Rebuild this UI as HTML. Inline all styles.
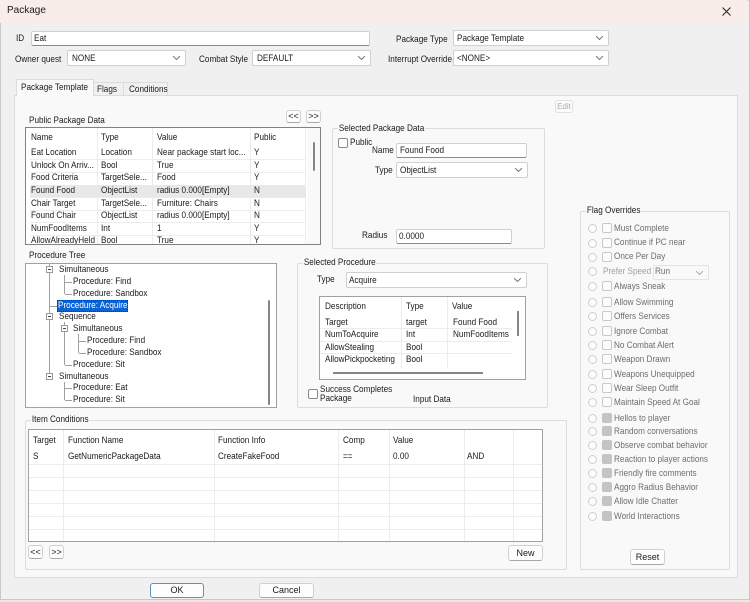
<!DOCTYPE html>
<html><head><meta charset="utf-8"><style>
*{box-sizing:border-box;margin:0;padding:0}
body{width:750px;height:602px;background:#e8e8e8;position:relative;overflow:hidden;font-family:"Liberation Sans",sans-serif;font-size:9.5px;color:#1a1a1a}
div,span{position:absolute}
.win{left:0;top:0;width:750px;height:600px;background:#f0f0f0;border:1px solid #c8c8c8}
.title{left:0;top:0;width:748px;height:23px;background:#f8ede8}
.t{white-space:nowrap;line-height:10px;transform:scaleX(0.86);transform-origin:0 0}
.in{background:#fff;border:1px solid #d0d0d0;border-bottom:1px solid #8a8a8a;border-radius:2px}
.cb{background:#fff;border:1px solid #d0d0d0;border-radius:2px}
.cb svg{position:absolute;right:5px;top:50%;margin-top:-2px}
.grp{border:1px solid #dcdcdc;border-radius:2px}
.lbl{background:#f9f9f9;padding:0 1px}
.lv{background:#fff;border:1px solid #828282}
.btn{background:#fdfdfd;border:1px solid #d0d0d0;border-bottom-color:#a8a8a8;border-radius:3px;text-align:center;font-size:9px}
.chk{width:10px;height:10px;border:1px solid #8a8a8a;border-radius:2px;background:#fff}
.dchk{width:10px;height:10px;border:1px solid #c8c8c8;border-radius:2px;background:#fcfcfc}
.cchk{width:10px;height:10px;border-radius:2px;background:#c4c4c4}
.rad{width:9px;height:9px;border:1px solid #cfcfcf;border-radius:50%;background:#fcfcfc}
.g{color:#6e6e6e}
.hl{background:#e8e8e8}
.vl{width:1px;background:#ececec}
.hr{height:1px;background:#ececec}
.tl{background:#a0a0a0}
</style></head><body>
<div class="win"></div>
<div class="title"></div>
<div class="t" style="left:7px;top:6px;font-size:10px;transform:none">Package</div>
<svg style="position:absolute;left:722px;top:7px" width="9" height="9"><path d="M0.5 0.5L8.5 8.5M8.5 0.5L0.5 8.5" stroke="#222" stroke-width="1"/></svg>

<div class="t" style="left:16px;top:34px">ID</div>
<div class="in" style="left:31px;top:31px;width:339px;height:15px"></div><div class="t" style="left:34px;top:34px">Eat</div>
<div class="t" style="left:15px;top:55px">Owner quest</div>
<div class="cb" style="left:67px;top:50px;width:119px;height:16px"><svg width="7" height="4"><path d="M0 0L3.5 3.5L7 0" stroke="#777" fill="none"/></svg></div><div class="t" style="left:72px;top:54px">NONE</div>
<div class="t" style="left:199px;top:55px">Combat Style</div>
<div class="cb" style="left:252px;top:50px;width:119px;height:16px"><svg width="7" height="4"><path d="M0 0L3.5 3.5L7 0" stroke="#777" fill="none"/></svg></div><div class="t" style="left:257px;top:54px">DEFAULT</div>
<div class="t" style="left:396px;top:35px">Package Type</div>
<div class="cb" style="left:453px;top:30px;width:156px;height:16px"><svg width="7" height="4"><path d="M0 0L3.5 3.5L7 0" stroke="#777" fill="none"/></svg></div><div class="t" style="left:457px;top:34px">Package Template</div>
<div class="t" style="left:388px;top:55px">Interrupt Override</div>
<div class="cb" style="left:453px;top:50px;width:156px;height:16px"><svg width="7" height="4"><path d="M0 0L3.5 3.5L7 0" stroke="#777" fill="none"/></svg></div><div class="t" style="left:457px;top:54px">&lt;NONE&gt;</div>

<!-- tabs -->
<div style="left:14px;top:95px;width:724px;height:483px;background:#f9f9f9;border:1px solid #dcdcdc"></div>
<div style="left:16px;top:79px;width:78px;height:17px;background:#f9f9f9;border:1px solid #dcdcdc;border-bottom:none"></div>
<div class="t" style="left:21px;top:83px">Package Template</div>
<div style="left:94px;top:82px;width:30px;height:13px;border:1px solid #dcdcdc;border-bottom:none;border-left:none"></div><div class="t" style="left:97px;top:85px">Flags</div>
<div style="left:124px;top:82px;width:44px;height:13px;border:1px solid #dcdcdc;border-bottom:none;border-left:none"></div><div class="t" style="left:129px;top:85px">Conditions</div>

<div class="btn" style="left:555px;top:100px;width:18px;height:13px;border-color:#e0e0e0;color:#a8a8a8;line-height:11px;font-size:8px">Edit</div>

<!-- Public package data -->
<div class="t" style="left:29px;top:116px">Public Package Data</div>
<div class="btn" style="left:286px;top:110px;width:15px;height:13px;line-height:10px">&lt;&lt;</div>
<div class="btn" style="left:306px;top:110px;width:15px;height:13px;line-height:10px">&gt;&gt;</div>
<div class="lv" style="left:25px;top:127px;width:296px;height:118px;overflow:hidden">
 <div class="vl" style="left:71px;top:0;height:116px"></div><div class="vl" style="left:126px;top:0;height:116px"></div><div class="vl" style="left:224px;top:0;height:116px"></div><div class="vl" style="left:279px;top:0;height:116px"></div>
 <div class="hl" style="left:4px;top:57px;width:276px;height:12px"></div>
 <div class="hr" style="left:4px;top:31px;width:276px"></div><div class="hr" style="left:4px;top:44px;width:276px"></div><div class="hr" style="left:4px;top:69px;width:276px"></div><div class="hr" style="left:4px;top:82px;width:276px"></div><div class="hr" style="left:4px;top:94px;width:276px"></div><div class="hr" style="left:4px;top:107px;width:276px"></div>
 <div style="left:281px;top:0;width:14px;height:116px;background:#f9f9f9"></div>
 <div style="left:287px;top:14px;width:2px;height:29px;background:#858585;border-radius:1px"></div>
</div>
<div class="t" style="left:31px;top:133px">Name</div><div class="t" style="left:101px;top:133px">Type</div><div class="t" style="left:157px;top:133px">Value</div><div class="t" style="left:254px;top:133px">Public</div>
<div class="t" style="left:31px;top:148px">Eat Location</div><div class="t" style="left:101px;top:148px">Location</div><div class="t" style="left:157px;top:148px">Near package start loc...</div><div class="t" style="left:254px;top:148px">Y</div>
<div class="t" style="left:31px;top:161px">Unlock On Arriv...</div><div class="t" style="left:101px;top:161px">Bool</div><div class="t" style="left:157px;top:161px">True</div><div class="t" style="left:254px;top:161px">Y</div>
<div class="t" style="left:31px;top:173px">Food Criteria</div><div class="t" style="left:101px;top:173px">TargetSele...</div><div class="t" style="left:157px;top:173px">Food</div><div class="t" style="left:254px;top:173px">Y</div>
<div class="t" style="left:31px;top:186px">Found Food</div><div class="t" style="left:101px;top:186px">ObjectList</div><div class="t" style="left:157px;top:186px">radius 0.000[Empty]</div><div class="t" style="left:254px;top:186px">N</div>
<div class="t" style="left:31px;top:199px">Chair Target</div><div class="t" style="left:101px;top:199px">TargetSele...</div><div class="t" style="left:157px;top:199px">Furniture: Chairs</div><div class="t" style="left:254px;top:199px">N</div>
<div class="t" style="left:31px;top:211px">Found Chair</div><div class="t" style="left:101px;top:211px">ObjectList</div><div class="t" style="left:157px;top:211px">radius 0.000[Empty]</div><div class="t" style="left:254px;top:211px">N</div>
<div class="t" style="left:31px;top:224px">NumFoodItems</div><div class="t" style="left:101px;top:224px">Int</div><div class="t" style="left:157px;top:224px">1</div><div class="t" style="left:254px;top:224px">Y</div>
<div style="left:26px;top:236px;width:280px;height:8px;overflow:hidden"><div class="t" style="left:5px;top:0">AllowAlreadyHeld</div><div class="t" style="left:75px;top:0">Bool</div><div class="t" style="left:131px;top:0">True</div><div class="t" style="left:228px;top:0">Y</div></div>

<!-- selected package data -->
<div class="grp" style="left:332px;top:128px;width:213px;height:121px"></div>
<div class="t lbl" style="left:338px;top:124px">Selected Package Data</div>
<div class="chk" style="left:338px;top:138px"></div><div class="t" style="left:350px;top:138px">Public</div>
<div class="t" style="left:372px;top:146px">Name</div>
<div class="in" style="left:396px;top:143px;width:131px;height:15px"></div><div class="t" style="left:400px;top:146px">Found Food</div>
<div class="t" style="left:375px;top:166px">Type</div>
<div class="cb" style="left:396px;top:162px;width:132px;height:16px"><svg width="7" height="4"><path d="M0 0L3.5 3.5L7 0" stroke="#777" fill="none"/></svg></div><div class="t" style="left:400px;top:166px">ObjectList</div>
<div class="t" style="left:362px;top:231px">Radius</div>
<div class="in" style="left:396px;top:229px;width:116px;height:15px"></div><div class="t" style="left:399px;top:232px">0.0000</div>

<!-- procedure tree -->
<div class="t" style="left:29px;top:251px">Procedure Tree</div>
<div class="lv" style="left:25px;top:263px;width:252px;height:145px;border-color:#a0a0a0"></div>
<div style="left:268px;top:300px;width:2px;height:105px;background:#858585;border-radius:1px"></div>
<div class="tl" style="left:49px;top:264px;width:1px;height:113px"></div>
<div class="tl" style="left:64px;top:275px;width:1px;height:19px"></div>
<div class="tl" style="left:65px;top:282px;width:7px;height:1px"></div><div class="tl" style="left:65px;top:294px;width:7px;height:1px"></div>
<div class="tl" style="left:50px;top:306px;width:7px;height:1px"></div>
<div class="tl" style="left:64px;top:322px;width:1px;height:43px"></div>
<div class="tl" style="left:78px;top:334px;width:1px;height:19px"></div>
<div class="tl" style="left:79px;top:341px;width:7px;height:1px"></div><div class="tl" style="left:79px;top:353px;width:7px;height:1px"></div>
<div class="tl" style="left:65px;top:365px;width:7px;height:1px"></div>
<div class="tl" style="left:64px;top:382px;width:1px;height:18px"></div>
<div class="tl" style="left:65px;top:388px;width:7px;height:1px"></div><div class="tl" style="left:65px;top:400px;width:7px;height:1px"></div>
<div style="left:46px;top:266px;width:7px;height:7px;border:1px solid #999;background:#fff"><div style="left:1px;top:2px;width:3px;height:1px;background:#444"></div></div>
<div style="left:46px;top:313px;width:7px;height:7px;border:1px solid #999;background:#fff"><div style="left:1px;top:2px;width:3px;height:1px;background:#444"></div></div>
<div style="left:61px;top:325px;width:7px;height:7px;border:1px solid #999;background:#fff"><div style="left:1px;top:2px;width:3px;height:1px;background:#444"></div></div>
<div style="left:46px;top:373px;width:7px;height:7px;border:1px solid #999;background:#fff"><div style="left:1px;top:2px;width:3px;height:1px;background:#444"></div></div>
<div class="t" style="left:59px;top:265px">Simultaneous</div>
<div class="t" style="left:73px;top:277px">Procedure: Find</div>
<div class="t" style="left:73px;top:289px">Procedure: Sandbox</div>
<div style="left:57px;top:300px;width:71px;height:12px;background:#0a64d6;border:1px dotted #333"></div>
<div class="t" style="left:58px;top:301px;color:#fff">Procedure: Acquire</div>
<div class="t" style="left:59px;top:312px">Sequence</div>
<div class="t" style="left:73px;top:324px">Simultaneous</div>
<div class="t" style="left:87px;top:336px">Procedure: Find</div>
<div class="t" style="left:87px;top:348px">Procedure: Sandbox</div>
<div class="t" style="left:73px;top:360px">Procedure: Sit</div>
<div class="t" style="left:59px;top:372px">Simultaneous</div>
<div class="t" style="left:73px;top:383px">Procedure: Eat</div>
<div class="t" style="left:73px;top:395px">Procedure: Sit</div>

<!-- selected procedure -->
<div class="grp" style="left:297px;top:263px;width:251px;height:145px"></div>
<div class="t lbl" style="left:303px;top:258px">Selected Procedure</div>
<div class="t" style="left:317px;top:275px">Type</div>
<div class="cb" style="left:346px;top:272px;width:181px;height:16px"><svg width="7" height="4"><path d="M0 0L3.5 3.5L7 0" stroke="#777" fill="none"/></svg></div><div class="t" style="left:349px;top:276px">Acquire</div>
<div class="lv" style="left:319px;top:296px;width:207px;height:84px;border-color:#a0a0a0">
 <div class="vl" style="left:81px;top:0;height:71px"></div><div class="vl" style="left:127px;top:0;height:71px"></div>
 <div class="hr" style="left:0;top:31px;width:192px"></div><div class="hr" style="left:0;top:44px;width:192px"></div><div class="hr" style="left:0;top:56px;width:192px"></div>
 <div style="left:197px;top:14px;width:2px;height:25px;background:#858585"></div>
 <div style="left:13px;top:75px;width:150px;height:2px;background:#858585"></div>
</div>
<div class="t" style="left:325px;top:302px">Description</div><div class="t" style="left:406px;top:302px">Type</div><div class="t" style="left:452px;top:302px">Value</div>
<div class="t" style="left:325px;top:318px">Target</div><div class="t" style="left:406px;top:318px">target</div><div class="t" style="left:453px;top:318px">Found Food</div>
<div class="t" style="left:325px;top:330px">NumToAcquire</div><div class="t" style="left:406px;top:330px">Int</div><div class="t" style="left:453px;top:330px">NumFoodItems</div>
<div class="t" style="left:325px;top:343px">AllowStealing</div><div class="t" style="left:406px;top:343px">Bool</div>
<div class="t" style="left:325px;top:355px">AllowPickpocketing</div><div class="t" style="left:406px;top:355px">Bool</div>
<div class="chk" style="left:308px;top:389px"></div>
<div class="t" style="left:320px;top:385px">Success Completes</div><div class="t" style="left:320px;top:394px">Package</div>
<div class="t" style="left:413px;top:395px">Input Data</div>

<!-- item conditions -->
<div class="grp" style="left:25px;top:420px;width:542px;height:150px"></div>
<div class="t lbl" style="left:31px;top:415px">Item Conditions</div>
<div class="lv" style="left:28px;top:429px;width:515px;height:113px;border-color:#a0a0a0">
 <div class="vl" style="left:34px;top:0;height:111px"></div><div class="vl" style="left:185px;top:0;height:111px"></div><div class="vl" style="left:309px;top:0;height:111px"></div><div class="vl" style="left:360px;top:0;height:111px"></div><div class="vl" style="left:435px;top:0;height:111px"></div><div class="vl" style="left:484px;top:0;height:111px"></div>
 <div class="hr" style="left:0;top:34px;width:513px"></div><div class="hr" style="left:0;top:47px;width:513px"></div><div class="hr" style="left:0;top:60px;width:513px"></div><div class="hr" style="left:0;top:73px;width:513px"></div><div class="hr" style="left:0;top:86px;width:513px"></div><div class="hr" style="left:0;top:99px;width:513px"></div>
</div>
<div class="t" style="left:33px;top:436px">Target</div><div class="t" style="left:68px;top:436px">Function Name</div><div class="t" style="left:218px;top:436px">Function Info</div><div class="t" style="left:343px;top:436px">Comp</div><div class="t" style="left:393px;top:436px">Value</div>
<div class="t" style="left:33px;top:452px">S</div><div class="t" style="left:68px;top:452px">GetNumericPackageData</div><div class="t" style="left:218px;top:452px">CreateFakeFood</div><div class="t" style="left:343px;top:452px">==</div><div class="t" style="left:393px;top:452px">0.00</div><div class="t" style="left:467px;top:452px">AND</div>
<div class="btn" style="left:28px;top:545px;width:15px;height:14px;line-height:12px">&lt;&lt;</div>
<div class="btn" style="left:49px;top:545px;width:15px;height:14px;line-height:12px">&gt;&gt;</div>
<div class="btn" style="left:508px;top:545px;width:35px;height:16px;line-height:14px">New</div>

<!-- flag overrides -->
<div class="grp" style="left:580px;top:211px;width:150px;height:359px"></div>
<div class="t lbl" style="left:586px;top:206px">Flag Overrides</div>
<div class="rad" style="left:588px;top:224px"></div><div class="dchk" style="left:602px;top:223px"></div><div class="t g" style="left:614px;top:224px">Must Complete</div>
<div class="rad" style="left:588px;top:239px"></div><div class="dchk" style="left:602px;top:238px"></div><div class="t g" style="left:614px;top:238px">Continue if PC near</div>
<div class="rad" style="left:588px;top:253px"></div><div class="dchk" style="left:602px;top:252px"></div><div class="t g" style="left:614px;top:252px">Once Per Day</div>
<div class="rad" style="left:588px;top:267px"></div><div class="t" style="left:603px;top:267px;color:#a0a0a0">Prefer Speed</div>
<div style="left:653px;top:265px;width:56px;height:15px;border:1px solid #e4e4e4;background:#f9f9f9"><svg style="position:absolute;right:5px;top:5px" width="7" height="4"><path d="M0 0L3.5 3.5L7 0" stroke="#aaa" fill="none"/></svg></div><div class="t g" style="left:655px;top:267px">Run</div>
<div class="rad" style="left:588px;top:282px"></div><div class="dchk" style="left:602px;top:281px"></div><div class="t g" style="left:614px;top:282px">Always Sneak</div>
<div class="rad" style="left:588px;top:298px"></div><div class="dchk" style="left:602px;top:297px"></div><div class="t g" style="left:614px;top:298px">Allow Swimming</div>
<div class="rad" style="left:588px;top:312px"></div><div class="dchk" style="left:602px;top:311px"></div><div class="t g" style="left:614px;top:312px">Offers Services</div>
<div class="rad" style="left:588px;top:327px"></div><div class="dchk" style="left:602px;top:326px"></div><div class="t g" style="left:614px;top:327px">Ignore Combat</div>
<div class="rad" style="left:588px;top:341px"></div><div class="dchk" style="left:602px;top:340px"></div><div class="t g" style="left:614px;top:341px">No Combat Alert</div>
<div class="rad" style="left:588px;top:355px"></div><div class="dchk" style="left:602px;top:354px"></div><div class="t g" style="left:614px;top:355px">Weapon Drawn</div>
<div class="rad" style="left:588px;top:370px"></div><div class="dchk" style="left:602px;top:369px"></div><div class="t g" style="left:614px;top:370px">Weapons Unequipped</div>
<div class="rad" style="left:588px;top:384px"></div><div class="dchk" style="left:602px;top:383px"></div><div class="t g" style="left:614px;top:384px">Wear Sleep Outfit</div>
<div class="rad" style="left:588px;top:398px"></div><div class="dchk" style="left:602px;top:397px"></div><div class="t g" style="left:614px;top:398px">Maintain Speed At Goal</div>
<div class="rad" style="left:588px;top:414px"></div><div class="cchk" style="left:602px;top:413px"></div><div class="t g" style="left:614px;top:414px">Hellos to player</div>
<div class="rad" style="left:588px;top:427px"></div><div class="cchk" style="left:602px;top:426px"></div><div class="t g" style="left:614px;top:427px">Random conversations</div>
<div class="rad" style="left:588px;top:441px"></div><div class="cchk" style="left:602px;top:440px"></div><div class="t g" style="left:614px;top:441px">Observe combat behavior</div>
<div class="rad" style="left:588px;top:455px"></div><div class="cchk" style="left:602px;top:454px"></div><div class="t g" style="left:614px;top:455px">Reaction to player actions</div>
<div class="rad" style="left:588px;top:469px"></div><div class="cchk" style="left:602px;top:468px"></div><div class="t g" style="left:614px;top:469px">Friendly fire comments</div>
<div class="rad" style="left:588px;top:483px"></div><div class="cchk" style="left:602px;top:482px"></div><div class="t g" style="left:614px;top:483px">Aggro Radius Behavior</div>
<div class="rad" style="left:588px;top:497px"></div><div class="cchk" style="left:602px;top:496px"></div><div class="t g" style="left:614px;top:497px">Allow Idle Chatter</div>
<div class="rad" style="left:588px;top:512px"></div><div class="cchk" style="left:602px;top:511px"></div><div class="t g" style="left:614px;top:512px">World Interactions</div>
<div class="btn" style="left:630px;top:549px;width:35px;height:16px;line-height:14px">Reset</div>

<div class="btn" style="left:150px;top:583px;width:54px;height:15px;line-height:13px;border:1px solid #5b8fd0">OK</div>
<div class="btn" style="left:259px;top:583px;width:55px;height:15px;line-height:13px">Cancel</div>
</body></html>
